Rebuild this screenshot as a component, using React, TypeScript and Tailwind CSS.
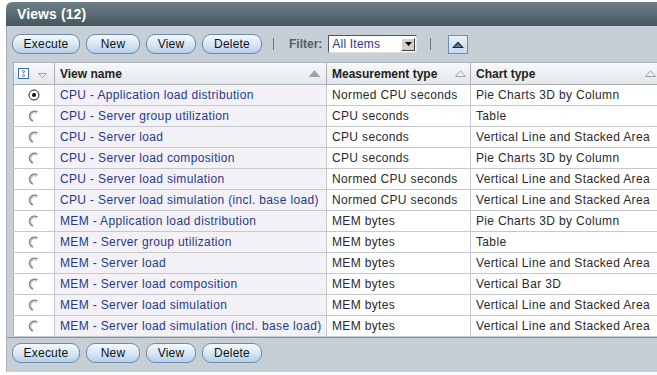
import React from "react";

const rows: [string, string, string][] = [
  ["CPU - Application load distribution", "Normed CPU seconds", "Pie Charts 3D by Column"],
  ["CPU - Server group utilization", "CPU seconds", "Table"],
  ["CPU - Server load", "CPU seconds", "Vertical Line and Stacked Area"],
  ["CPU - Server load composition", "CPU seconds", "Pie Charts 3D by Column"],
  ["CPU - Server load simulation", "Normed CPU seconds", "Vertical Line and Stacked Area"],
  ["CPU - Server load simulation (incl. base load)", "Normed CPU seconds", "Vertical Line and Stacked Area"],
  ["MEM - Application load distribution", "MEM bytes", "Pie Charts 3D by Column"],
  ["MEM - Server group utilization", "MEM bytes", "Table"],
  ["MEM - Server load", "MEM bytes", "Vertical Line and Stacked Area"],
  ["MEM - Server load composition", "MEM bytes", "Vertical Bar 3D"],
  ["MEM - Server load simulation", "MEM bytes", "Vertical Line and Stacked Area"],
  ["MEM - Server load simulation (incl. base load)", "MEM bytes", "Vertical Line and Stacked Area"],
];

function Btn({ label, w }: { label: string; w: string }) {
  return (
    <button
      className={`${w} h-[20px] rounded-[9px] border border-[#6f8aa6] bg-gradient-to-b from-[#f4f9fd] via-[#d9e8f5] to-[#b3cfe8] text-[12px] leading-none text-[#111] tracking-[0.2px] flex items-center justify-center`}
    >
      {label}
    </button>
  );
}

function Buttons() {
  return (
    <div className="flex items-center gap-[6px]">
      <Btn label="Execute" w="w-[68px]" />
      <Btn label="New" w="w-[54px]" />
      <Btn label="View" w="w-[50px]" />
      <Btn label="Delete" w="w-[60px]" />
    </div>
  );
}

function Radio({ checked }: { checked: boolean }) {
  if (checked)
    return (
      <svg width="12" height="12" viewBox="0 0 12 12">
        <circle cx="6" cy="6" r="5" fill="#fff" stroke="#222" strokeWidth="1" />
        <circle cx="6" cy="6" r="2" fill="#111" />
      </svg>
    );
  return (
    <svg width="12" height="12" viewBox="0 0 12 12">
      <path d="M9.5 2.2 A5 5 0 1 0 5 11" fill="none" stroke="#8a8a8a" strokeWidth="1.6" />
      <path d="M8.3 3.3 A3.5 3.5 0 1 0 4.6 9.4" fill="none" stroke="#c4c4c4" strokeWidth="1" />
    </svg>
  );
}

function TriUp({ filled }: { filled: boolean }) {
  return (
    <svg width="11" height="7" viewBox="0 0 11 7">
      <path
        d="M0.5 6.5 L5.5 0.8 L10.5 6.5 Z"
        fill={filled ? "#9aa2aa" : "#eef0f2"}
        stroke="#9aa2aa"
        strokeWidth="1"
      />
    </svg>
  );
}

export default function App() {
  const font = { fontFamily: '"Liberation Sans", Arial, sans-serif' };
  return (
    <div className="w-[657px] h-[375px] bg-white overflow-hidden" style={font}>
      <div className="pt-[2px] pl-[6px] w-[680px]">
        <div className="h-[24px] rounded-tl-[6px] bg-gradient-to-b from-[#6f808b] to-[#45565f] flex items-center pl-[11px]">
          <span className="text-white font-bold text-[14px] tracking-[0.1px]">Views (12)</span>
        </div>
        <div className="bg-[#c6ced6] border-l border-[#a7b0b8]">
          <div className="h-[36px] flex items-center pl-[5px]">
            <Buttons />
            <div className="w-px h-[12px] bg-[#6c7680] ml-[11px]" />
            <span className="ml-[15px] text-[12px] font-bold text-[#555d66]">Filter:</span>
            <div className="ml-[6px] w-[89px] h-[18px] bg-white border border-t-[#555] border-l-[#555] border-b-[#ddd] border-r-[#ddd] flex items-center justify-between pl-[3px] pr-[1px]">
              <span className="text-[12px] text-[#1f3a88] tracking-[0.2px]">All Items</span>
              <div className="w-[14px] h-[13px] bg-[#d4d0c8] border border-t-white border-l-white border-r-[#404040] border-b-[#404040] flex items-center justify-center">
                <svg width="7" height="4" viewBox="0 0 7 4">
                  <path d="M0 0 L7 0 L3.5 4 Z" fill="#000" />
                </svg>
              </div>
            </div>
            <div className="w-px h-[12px] bg-[#6c7680] ml-[13px]" />
            <div className="ml-[17px] w-[20px] h-[19px] border border-[#6a8fb8] bg-gradient-to-b from-[#e8f2fb] to-[#c3dbf0] flex items-center justify-center">
              <svg width="12" height="7" viewBox="0 0 12 7">
                <path d="M0 7 L6 0.5 L12 7 Z" fill="#1d2a3a" />
                <path d="M2.5 6 L6 2.5 L9.5 6 Z" fill="#5a7ea8" />
              </svg>
            </div>
          </div>
          <div className="pl-[6px]">
            <table className="border-collapse text-[12px] table-fixed w-[700px] bg-white">
              <colgroup>
                <col className="w-[41px]" />
                <col className="w-[272px]" />
                <col className="w-[144px]" />
                <col className="w-[243px]" />
              </colgroup>
              <thead>
                <tr className="h-[22px] bg-gradient-to-b from-[#f7f8f9] to-[#e3e7ea]">
                  <th className="border border-[#a9b0b7] px-[4px]">
                    <div className="flex items-center justify-between">
                      <div className="w-[11px] h-[11px] border border-[#3c6eb0] bg-white flex flex-col items-center justify-center gap-[1px]">
                        <div className="w-[3px] h-[3px] rounded-full border border-[#3c6eb0]" />
                        <div className="w-[3px] h-[3px] rounded-full border border-[#3c6eb0]" />
                      </div>
                      <svg width="9" height="5" viewBox="0 0 9 5" className="mr-[3px] mt-[3px]">
                        <path d="M0.5 0.5 L8.5 0.5 L4.5 4.5 Z" fill="#eef0f2" stroke="#9aa2aa" strokeWidth="1" />
                      </svg>
                    </div>
                  </th>
                  <th className="border border-[#a9b0b7] text-left pl-[5px] pr-[6px] font-bold text-[#222]">
                    <div className="flex items-center justify-between">
                      <span>View name</span>
                      <TriUp filled />
                    </div>
                  </th>
                  <th className="border border-[#a9b0b7] text-left pl-[5px] pr-[4px] font-bold text-[#222]">
                    <div className="flex items-center justify-between">
                      <span>Measurement type</span>
                      <TriUp filled={false} />
                    </div>
                  </th>
                  <th className="border border-[#a9b0b7] text-left pl-[5px] font-bold text-[#222]">
                    <div className="flex items-center w-[180px] justify-between">
                      <span>Chart type</span>
                      <TriUp filled={false} />
                    </div>
                  </th>
                </tr>
              </thead>
              <tbody>
                {rows.map((r, i) => (
                  <tr key={i} className="h-[21px]">
                    <td className="border border-[#c4c9ce] border-l-[#a9b0b7] text-center">
                      <div className="flex justify-center">
                        <Radio checked={i === 0} />
                      </div>
                    </td>
                    <td className="border border-[#c4c9ce] bg-[#f3f1f5] pl-[5px] text-[#1f3a88] whitespace-nowrap overflow-hidden tracking-[0.35px]">
                      {r[0]}
                    </td>
                    <td className="border border-[#c4c9ce] pl-[5px] text-[#2a2a2a] whitespace-nowrap overflow-hidden tracking-[0.35px]">
                      {r[1]}
                    </td>
                    <td className="border border-[#c4c9ce] pl-[5px] text-[#2a2a2a] whitespace-nowrap overflow-hidden tracking-[0.35px]">
                      {r[2]}
                    </td>
                  </tr>
                ))}
              </tbody>
            </table>
          </div>
          <div className="h-[35px] flex items-start pt-[5px] pl-[5px] border-t border-[#8a949e]">
            <Buttons />
          </div>
        </div>
      </div>
    </div>
  );
}
